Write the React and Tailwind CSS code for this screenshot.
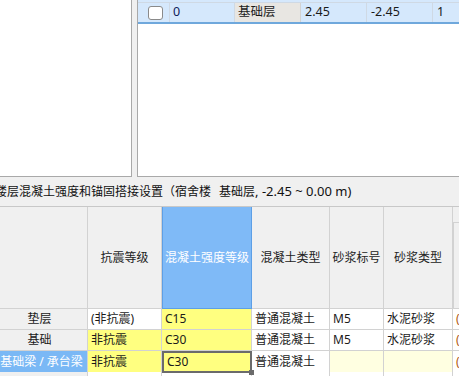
import React from 'react'

var FONT = { fontFamily: '"Noto Sans", "Noto Sans CJK SC", sans-serif' }

var COLS = 'grid grid-cols-[88px_74px_90px_78px_54px_69px_1fr]'

var rows = [
  { name: '垫层', seis: '(非抗震)', seisBg: 'bg-white', grade: 'C15', type: '普通混凝土', mortar: 'M5', mortarType: '水泥砂浆', tail: 'bg-white' },
  { name: '基础', seis: '非抗震', seisBg: 'bg-[#ffff80]', grade: 'C30', type: '普通混凝土', mortar: 'M5', mortarType: '水泥砂浆', tail: 'bg-white' },
  { name: '基础梁 / 承台梁', seis: '非抗震', seisBg: 'bg-[#ffff80]', grade: 'C30', type: '普通混凝土', mortar: '', mortarType: '', tail: 'bg-[#ffffe1]', active: true },
]

export default function App() {
  return (
    <div className="w-[459px] h-[376px] overflow-hidden bg-[#f0f0f0] text-[12px] text-[#1a1a1a]" style={FONT}>
      {/* upper panels */}
      <div className="flex h-[177px]">
        <div className="w-[132px] bg-white border-r border-b border-[#a9a9a9]" />
        <div className="w-[5px]" />
        <div className="flex-1 bg-white border-l border-b border-[#a9a9a9] overflow-hidden">
          <div className="h-[3px] bg-[#d5e8fc] border-b border-[#cfd9e4]" />
          <div className="flex h-[21px] bg-[#d5e8fc] border-b-2 border-[#6fa8dc] text-[12.5px]">
            <div className="w-[32px] flex items-center justify-center border-r border-[#cfd9e4]">
              <div className="w-[15px] h-[14px] bg-white border border-[#8a8a8a] rounded-[3px] ml-[3px]" />
            </div>
            <div className="w-[65px] flex items-center pl-[3px] border-r border-[#cfd9e4] text-[#10205a]">0</div>
            <div className="w-[66px] flex items-center pl-[3px] border-r border-[#d2d2d2] bg-[#e8e6e2]">基础层</div>
            <div className="w-[66px] flex items-center pl-[4px] border-r border-[#cfd9e4]">2.45</div>
            <div className="w-[66px] flex items-center pl-[4px] border-r border-[#cfd9e4]">-2.45</div>
            <div className="flex-1 flex items-center pl-[4px]">1</div>
          </div>
        </div>
      </div>

      {/* title */}
      <div className="h-[29px] flex items-center whitespace-nowrap ml-[-5px] text-[12px] text-[#111]">
        楼层混凝土强度和锚固搭接设置（宿舍楼
        <span className="ml-[8px]">基础层</span>
        <span className="text-[13px]">, -2.45 ~ 0.00 m)</span>
      </div>

      {/* table */}
      <div className="border-t border-[#c8c8c8]">
        <div className={COLS + ' h-[102px]'}>
          <HeadCell text="" />
          <HeadCell text="抗震等级" />
          <div className="flex items-center justify-center bg-[#7fbaf7] border border-t-0 border-[#5d9fe6] text-white whitespace-nowrap">混凝土强度等级</div>
          <HeadCell text="混凝土类型" />
          <HeadCell text="砂浆标号" />
          <HeadCell text="砂浆类型" />
          <div className="flex flex-col border-b border-[#d2d2d2]">
            <div className="h-[16px] border-b border-[#d2d2d2]" />
            <div className="flex-1 border-l border-[#d2d2d2]" />
          </div>
        </div>

        {rows.map(function (r, i) {
          return (
            <div key={i} className={COLS + ' h-[21px]'}>
              <div className={'flex items-center justify-center whitespace-nowrap border-r border-b border-[#d2d2d2] overflow-visible ' +
                (r.active ? 'bg-[#7ab8f5] text-white pr-[4px]' : 'bg-[#f0f0f0] pr-[8px]')}>
                {r.name}
              </div>
              <Cell bg={r.seisBg} text={r.seis} />
              {r.active ? (
                <div className="relative flex items-center pl-[3px] bg-[#ffff80] border-2 border-[#6b6b6b]">
                  {r.grade}
                  <span className="absolute right-[-4px] bottom-[-4px] w-[5px] h-[5px] bg-[#6b6b6b]" />
                </div>
              ) : (
                <Cell bg="bg-[#ffff80]" text={r.grade} />
              )}
              <Cell bg="bg-white" text={r.type} />
              <Cell bg={r.tail} text={r.mortar} />
              <Cell bg={r.tail} text={r.mortarType} />
              <div className="flex items-center pl-[3px] bg-white border-b border-[#d2d2d2] text-[#b0560a] overflow-hidden">(</div>
            </div>
          )
        })}

        <div className={COLS + ' h-[21px]'}>
          <div className="bg-[#f0f0f0] border-r border-[#d2d2d2]" />
          <div className="bg-white border-r border-[#d2d2d2]" />
          <div className="bg-white border-r border-[#d2d2d2]" />
          <div className="bg-white border-r border-[#d2d2d2]" />
          <div className="bg-white border-r border-[#d2d2d2]" />
          <div className="bg-white border-r border-[#d2d2d2]" />
          <div className="bg-white" />
        </div>
      </div>
    </div>
  )
}

function HeadCell({ text }) {
  return (
    <div className="flex items-center justify-center whitespace-nowrap bg-[#f0f0f0] border-r border-b border-[#d2d2d2] text-[#222]">
      {text}
    </div>
  )
}

function Cell({ bg, text }) {
  return (
    <div className={'flex items-center pl-[3px] whitespace-nowrap border-r border-b border-[#d2d2d2] ' + bg}>
      {text}
    </div>
  )
}
